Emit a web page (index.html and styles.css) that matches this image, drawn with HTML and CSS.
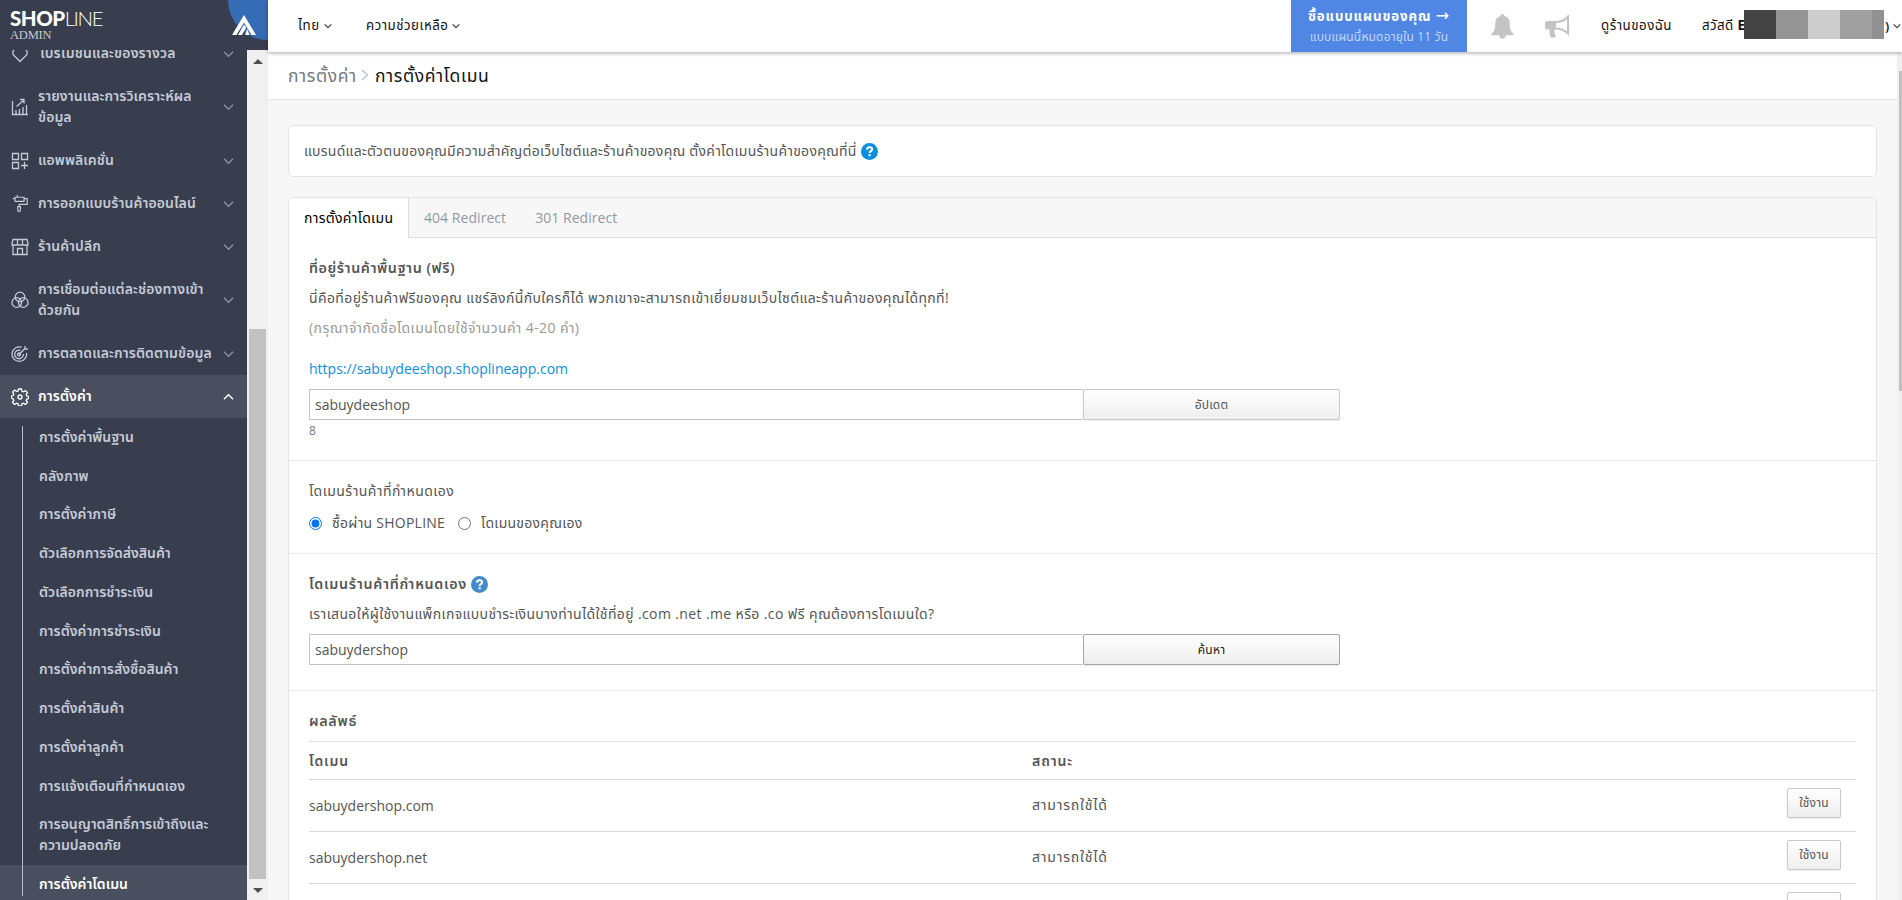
FILE: index.html
```
<!DOCTYPE html>
<html lang="th">
<head>
    <meta charset="UTF-8">
    <meta name="viewport" content="width=device-width, initial-scale=1.0">
    <title>การตั้งค่าโดเมน</title>
    <link rel="stylesheet" href="styles.css">
</head>
<body>
    <!-- icons -->
    <svg class="sprite" width="0" height="0">
        <symbol id="down" viewBox="0 0 12 8"><path d="M1 1.5l5 5 5-5"/></symbol>
        <symbol id="tag" viewBox="0 0 18 18"><path d="M9 16.5L2 9.5V6l3-3h8l3 3v3.500z"/></symbol>
        <symbol id="report" viewBox="0 0 18 18"><path d="M1.500 3v13.500H17M5 16v-4M8.500 16v-5M12 16V9M15.500 16V7M5.500 8.500L13 2M9 1.500h4v4"/></symbol>
        <symbol id="apps" viewBox="0 0 18 18"><path d="M1.500 1.500h6v6h-6zM10.500 1.500h6v6h-6zM1.500 10.500h6v6h-6zM13.500 10v7M10 13.500h7"/></symbol>
        <symbol id="paint" viewBox="0 0 18 20"><path d="M1 4h2.500M3.500 2v5h10V2.500h-10M6 0v3M13.500 4H17v6.500H8V13M6.500 13h3v3.500a1.500 2 0 0 1-3 0z"/></symbol>
        <symbol id="store" viewBox="0 0 18 18"><path d="M2 1.500h14l1 4v1.500H1V5.500zM2 7v9.500h14V7M6.500 1.500V7M11.500 1.500V7M6.500 16v-5.500h5V16"/></symbol>
        <symbol id="link" viewBox="0 0 18 18"><circle cx="9" cy="6" r="4.800"/><circle cx="5.800" cy="11.500" r="4.800"/><circle cx="12.200" cy="11.500" r="4.800"/></symbol>
        <symbol id="target" viewBox="0 0 18 18"><path d="M10.500 2.200A7.300 7.300 0 1 0 15.500 8M9.500 5.400A4.300 4.300 0 1 0 12.300 9M8 9.500l6-6M14 1v3h3"/><circle cx="8" cy="9.500" r="1.500"/></symbol>
        <symbol id="gear" viewBox="0 0 18 18"><path d="M7.500 1h3l.5 2.200 1.400.6 2-1.200 2 2-1.200 2 .6 1.400 1.900.5v2l-1.900.5-.6 1.400 1.200 2-2 2-2-1.200-1.400.6-.5 2.200h-3L7 15.800l-1.400-.6-2 1.200-2-2 1.200-2-.6-1.400L.5 10V8l1.700-.5.6-1.400-1.200-2 2-2 2 1.200L7 3.200z"/><circle cx="9" cy="9" r="2"/></symbol>
        <symbol id="help" viewBox="0 0 16 16"><circle cx="8" cy="8" r="8" fill="currentColor"/><path d="M5.600 6.200C5.700 4.600 6.700 4 8 4s2.500.7 2.500 2c0 1.600-2.400 1.600-2.400 3.300" fill="none" stroke="#fff" stroke-width="1.900"/><rect x="7.100" y="10.500" width="2" height="2" fill="#fff"/></symbol>
    </svg>

    <aside class="sidebar">
        <div class="brand">
            <div class="brand-name"><b>SHOP</b><span>LINE</span></div>
            <div class="brand-sub">ADMIN</div>
            <div class="brand-circle"></div>
            <svg class="brand-mark" viewBox="0 0 24 20"><path d="M12 0l12 20h-4.500L12 7.500 4.500 20H0zM12 9.500l2.200 3L10 20H6zM15.200 14l2.300 6h-4.500z" fill="#fff"/></svg>
        </div>
        <div class="side-body">
            <nav class="menu">
                <div class="item promo"><svg class="icon"><use href="#tag"/></svg><span>โปรโมชันและของรางวัล</span><svg class="arrow"><use href="#down"/></svg></div>
                <div class="item"><svg class="icon"><use href="#report"/></svg><span>รายงานและการวิเคราะห์ผล<br>ข้อมูล</span><svg class="arrow"><use href="#down"/></svg></div>
                <div class="item"><svg class="icon"><use href="#apps"/></svg><span>แอพพลิเคชั่น</span><svg class="arrow"><use href="#down"/></svg></div>
                <div class="item"><svg class="icon"><use href="#paint"/></svg><span>การออกแบบร้านค้าออนไลน์</span><svg class="arrow"><use href="#down"/></svg></div>
                <div class="item"><svg class="icon"><use href="#store"/></svg><span>ร้านค้าปลีก</span><svg class="arrow"><use href="#down"/></svg></div>
                <div class="item"><svg class="icon"><use href="#link"/></svg><span>การเชื่อมต่อแต่ละช่องทางเข้า<br>ด้วยกัน</span><svg class="arrow"><use href="#down"/></svg></div>
                <div class="item"><svg class="icon"><use href="#target"/></svg><span>การตลาดและการติดตามข้อมูล</span><svg class="arrow"><use href="#down"/></svg></div>
                <div class="item active"><svg class="icon"><use href="#gear"/></svg><span>การตั้งค่า</span><svg class="arrow up"><use href="#down"/></svg></div>
                <div class="submenu">
                    <div class="sub">การตั้งค่าพื้นฐาน</div>
                    <div class="sub">คลังภาพ</div>
                    <div class="sub">การตั้งค่าภาษี</div>
                    <div class="sub">ตัวเลือกการจัดส่งสินค้า</div>
                    <div class="sub">ตัวเลือกการชำระเงิน</div>
                    <div class="sub">การตั้งค่าการชำระเงิน</div>
                    <div class="sub">การตั้งค่าการสั่งซื้อสินค้า</div>
                    <div class="sub">การตั้งค่าสินค้า</div>
                    <div class="sub">การตั้งค่าลูกค้า</div>
                    <div class="sub">การแจ้งเตือนที่กำหนดเอง</div>
                    <div class="sub">การอนุญาตสิทธิ์การเข้าถึงและ<br>ความปลอดภัย</div>
                    <div class="sub active">การตั้งค่าโดเมน</div>
                </div>
            </nav>
            <div class="scroll">
                <div class="scroll-up"></div>
                <div class="scroll-thumb"></div>
                <div class="scroll-down"></div>
            </div>
        </div>
    </aside>

    <div class="page">
        <header class="topbar">
            <div class="top-link lang">ไทย<svg class="caret"><use href="#down"/></svg></div>
            <div class="top-link">ความช่วยเหลือ<svg class="caret"><use href="#down"/></svg></div>
            <div class="top-right">
                <div class="plan">
                    <div class="plan-title">ซื้อแบบแผนของคุณ <span class="plan-arrow">→</span></div>
                    <div class="plan-text">แบบแผนนี้หมดอายุใน 11 วัน</div>
                </div>
                <svg class="bell" viewBox="0 0 24 26"><path d="M12 0c1.200 0 2 .8 2 2 4 .9 5.500 4 5.500 8 0 6 1.500 8.500 4 10.500v1.500H.5v-1.500C3 18.500 4.500 16 4.500 10c0-4 1.500-7.100 5.500-8 0-1.200.8-2 2-2zM8.500 22h7c-.3 2.500-1.700 3.500-3.500 3.500s-3.200-1-3.500-3.500z"/></svg>
                <svg class="horn" viewBox="0 0 26 23"><path d="M2 6h9v8.500H9.500c-.5 2 .2 4.500 1.500 6.500-1 1.800-4 2-5.500 1-1-2-1.300-5-.8-7.500H2C.8 14.500 0 13.500 0 12.500V8c0-1 .8-2 2-2z"/><path d="M11 7c5 0 9-2 12-5.500v17C20 15.500 16 13.500 11 13.500" fill="none" stroke="#c4c4c4" stroke-width="2"/><path d="M23 8a2.500 2.500 0 0 1 0 4.500z"/></svg>
                <div class="top-text">ดูร้านของฉัน</div>
                <div class="user">
                    <span class="hello">สวัสดี <b>E</b></span>
                    <div class="mask"><i class="m1"></i><i class="m2"></i><i class="m3"></i><i class="m4"></i><i class="m5"></i></div>
                    <span class="paren">)</span>
                    <svg class="caret"><use href="#down"/></svg>
                </div>
            </div>
        </header>

        <div class="breadcrumb">
            <span class="crumb">การตั้งค่า</span>
            <svg class="sep" viewBox="0 0 8 12"><path d="M1 1l5.500 5L1 11"/></svg>
            <span class="current">การตั้งค่าโดเมน</span>
        </div>

        <main class="content">
            <div class="card intro">
                <span>แบรนด์และตัวตนของคุณมีความสำคัญต่อเว็บไซต์และร้านค้าของคุณ ตั้งค่าโดเมนร้านค้าของคุณที่นี่</span>
                <svg class="help"><use href="#help"/></svg>
            </div>

            <div class="card">
                <div class="tabs">
                    <div class="tab active">การตั้งค่าโดเมน</div>
                    <div class="tab">404 Redirect</div>
                    <div class="tab">301 Redirect</div>
                </div>

                <section class="section base">
                    <h4 class="title">ที่อยู่ร้านค้าพื้นฐาน (ฟรี)</h4>
                    <p class="desc">นี่คือที่อยู่ร้านค้าฟรีของคุณ แชร์ลิงก์นี้กับใครก็ได้ พวกเขาจะสามารถเข้าเยี่ยมชมเว็บไซต์และร้านค้าของคุณได้ทุกที่!</p>
                    <p class="muted">(กรุณาจำกัดชื่อโดเมนโดยใช้จำนวนคำ 4-20 คำ)</p>
                    <a class="shop-link" href="#">https://sabuydeeshop.shoplineapp.com</a>
                    <div class="input-group">
                        <input type="text" value="sabuydeeshop">
                        <button class="btn">อัปเดต</button>
                    </div>
                    <div class="count">8</div>
                </section>

                <section class="section custom">
                    <div class="label">โดเมนร้านค้าที่กำหนดเอง</div>
                    <div class="radios">
                        <label class="opt-buy"><input type="radio" name="domain" checked><span>ซื้อผ่าน SHOPLINE</span></label>
                        <label class="opt-own"><input type="radio" name="domain"><span>โดเมนของคุณเอง</span></label>
                    </div>
                </section>

                <section class="section search">
                    <h4 class="title own"><span>โดเมนร้านค้าที่กำหนดเอง</span><svg class="help soft"><use href="#help"/></svg></h4>
                    <p class="desc">เราเสนอให้ผู้ใช้งานแพ็กเกจแบบชำระเงินบางท่านได้ใช้ที่อยู่ .com .net .me หรือ .co ฟรี คุณต้องการโดเมนใด?</p>
                    <div class="input-group">
                        <input type="text" value="sabuydershop">
                        <button class="btn focus">ค้นหา</button>
                    </div>
                </section>

                <section class="section results">
                    <h4 class="title">ผลลัพธ์</h4>
                    <div class="row head"><span>โดเมน</span><span>สถานะ</span></div>
                    <div class="row"><span>sabuydershop.com</span><span class="status">สามารถใช้ได้</span><button class="btn small">ใช้งาน</button></div>
                    <div class="row"><span>sabuydershop.net</span><span class="status">สามารถใช้ได้</span><button class="btn small">ใช้งาน</button></div>
                    <div class="row"><span></span><span></span><button class="btn small"></button></div>
                </section>
            </div>
        </main>
        <div class="page-scroll"><div class="page-thumb"></div></div>
    </div>
</body>
</html>
```
FILE: styles.css
```
* {
    box-sizing: border-box;
}
body {
    margin: 0;
    display: flex;
    height: 900px;
    overflow: hidden;
    font-family: "Open Sans", "Noto Sans Thai", "Noto Sans", sans-serif;
    font-size: 14px;
    color: #555;
    background: #f7f7f7;
    white-space: nowrap;
}
h4, p {
    margin: 0;
}
.sprite {
    position: absolute;
}

/* sidebar */
.sidebar {
    width: 268px;
    height: 900px;
    flex: none;
    display: flex;
    flex-direction: column;
    background: #383e4d;
}
.brand {
    position: relative;
    height: 50px;
    flex: none;
    padding: 8px 0 0 10px;
    overflow: hidden;
    color: #fff;
}
.brand-name {
    font-family: Lato, sans-serif;
    font-size: 20.5px;
    line-height: 21px;
}
.brand-name b {
    font-weight: 900;
    letter-spacing: -.5px;
}
.brand-name span {
    font-weight: 300;
    letter-spacing: -1.4px;
}
.brand-sub {
    font-family: "Liberation Serif", serif;
    font-size: 12.5px;
    line-height: 12px;
    letter-spacing: -.2px;
    color: #c6c9d0;
}
.brand-circle {
    position: absolute;
    left: 228px;
    top: -40px;
    width: 80px;
    height: 80px;
    border-radius: 50%;
    background: #366bb5;
}
.brand-mark {
    position: absolute;
    left: 232px;
    top: 15px;
    width: 24px;
    height: 20px;
}
.side-body {
    flex: 1;
    min-height: 0;
    display: flex;
}
.menu {
    width: 247px;
    overflow: hidden;
    color: #c4cad8;
    font-weight: 600;
    line-height: 21px;
}
.item {
    display: flex;
    align-items: center;
    padding: 11px 13px 11px 11px;
}
.promo {
    margin-top: -18px;
}
.item span {
    flex: 1;
    margin: -1px 0 1px 9px;
    letter-spacing: .08px;
}
.item.promo span {
    margin: -1px 0 1px 11px;
    letter-spacing: .15px;
}
.item.active, .sub.active {
    background: #494f5e;
    color: #fff;
}
.icon {
    width: 18px;
    height: 18px;
    fill: none;
    stroke: currentColor;
    stroke-width: 1.3;
}
.arrow {
    width: 11px;
    height: 8px;
    fill: none;
    stroke: #8a90a0;
    stroke-width: 1.5;
}
.arrow.up {
    transform: rotate(180deg);
    stroke: #fff;
}
.submenu {
    position: relative;
}
.submenu::before {
    content: "";
    position: absolute;
    left: 22px;
    top: 8px;
    width: 1px;
    height: 470px;
    background: #b9bdc8;
}
.sub {
    padding: 7.875px 0 9.875px 39px;
}
.scroll {
    width: 21px;
    background: #f0f0f0;
    display: flex;
    flex-direction: column;
    align-items: center;
}
.scroll-up {
    margin-top: 9px;
    border: 5px solid transparent;
    border-top: 0;
    border-bottom-color: #505050;
}
.scroll-thumb {
    width: 17px;
    height: 550px;
    margin-top: 265px;
    background: #c1c1c1;
}
.scroll-down {
    margin-top: 9px;
    border: 5px solid transparent;
    border-bottom: 0;
    border-top-color: #505050;
}

/* top bar */
.page {
    position: relative;
    flex: 1;
    min-width: 0;
}
.topbar {
    position: relative;
    height: 52px;
    display: flex;
    align-items: center;
    padding-left: 30px;
    background: #fff;
    box-shadow: 0 1px 4px rgba(0, 0, 0, .35);
    color: #111;
    font-size: 13.3px;
    letter-spacing: .5px;
    z-index: 2;
}
.top-link {
    display: flex;
    align-items: center;
    gap: 4px;
}
.lang {
    width: 68px;
}
.caret {
    width: 8px;
    height: 6px;
    fill: none;
    stroke: #444;
    stroke-width: 1.8;
}
.top-right {
    width: 611px;
    height: 52px;
    margin-left: auto;
    display: flex;
    align-items: center;
}
.plan {
    width: 176px;
    height: 52px;
    background: #5087e5;
    color: #fff;
    text-align: center;
    padding-top: 5px;
}
.plan-title {
    font-weight: 700;
    line-height: 22px;
    letter-spacing: .9px;
}
.plan-arrow {
    font-family: "DejaVu Sans", sans-serif;
    font-size: 16px;
    font-weight: 400;
    line-height: 1;
}
.plan-text {
    font-size: 12px;
    line-height: 20px;
    letter-spacing: .15px;
    color: #c2d6fa;
}
.bell {
    width: 23px;
    height: 25px;
    margin-left: 24px;
    fill: #c4c4c4;
}
.horn {
    width: 26px;
    height: 23px;
    margin-left: 31px;
    fill: #c4c4c4;
}
.top-text {
    width: 101px;
    margin-left: 30px;
}
.user {
    display: flex;
    align-items: center;
}
.hello {
    width: 42px;
    overflow: hidden;
    letter-spacing: .4px;
}
.mask {
    display: flex;
    flex: none;
    width: 140px;
    height: 29px;
    margin-top: -3px;
}
.mask i {
    width: 32px;
}
.mask .m1 { background: #444; }
.mask .m2 { background: #949494; }
.mask .m3 { background: #cdcdcd; }
.mask .m4 { background: #9f9f9f; }
.mask .m5 { background: #919191; width: 12px; }
.paren {
    margin-left: 1px;
    font-weight: 600;
    letter-spacing: 0;
}
.user .caret {
    flex: none;
    margin-left: 4px;
}

/* breadcrumb */
.breadcrumb {
    height: 48px;
    display: flex;
    align-items: center;
    padding-left: 20px;
    background: #fff;
    border-bottom: 1px solid #e5e5e5;
    font-size: 17.5px;
    letter-spacing: .6px;
    color: #111;
}
.crumb {
    width: 66px;
    color: #777;
}
.sep {
    width: 8px;
    height: 12px;
    margin: -2px 6px 0 7px;
    fill: none;
    stroke: #b9bdc8;
    stroke-width: 1.3;
}
.crumb, .current {
    padding-top: 1px;
}

/* content */
.content {
    padding: 25px 25px 0 20px;
}
.card {
    background: #fff;
    border: 1px solid #e5e5e5;
    border-radius: 5px;
}
.intro {
    height: 52px;
    margin-bottom: 20px;
    padding-left: 15px;
    display: flex;
    align-items: center;
    gap: 4px;
    letter-spacing: .26px;
}
.help {
    width: 17px;
    height: 17px;
    color: #0a8fe0;
}
.help.soft {
    color: #428bca;
}
.tabs {
    height: 40px;
    display: flex;
    background: #f7f7f7;
    border-bottom: 1px solid #dcdcdc;
    border-radius: 5px 5px 0 0;
    color: #9297a5;
    line-height: 40px;
}
.tab {
    padding: 0 14px 0 15px;
    letter-spacing: .05px;
}
.tab.active {
    width: 120px;
    height: 40px;
    background: #fff;
    border-right: 1px solid #dcdcdc;
    border-radius: 5px 0 0 0;
    color: #000;
    letter-spacing: .3px;
}
.section {
    padding: 0 20px;
    border-bottom: 1px solid #e8e8e8;
}
.title {
    font-size: 14.3px;
    font-weight: 600;
    line-height: 30px;
    letter-spacing: .7px;
}
.base .title {
    letter-spacing: .55px;
}
.desc {
    line-height: 30px;
    letter-spacing: .38px;
}
.muted {
    line-height: 30px;
    letter-spacing: .43px;
    color: #999;
}
.base {
    height: 223px;
    padding-top: 15px;
}
.shop-link {
    display: block;
    line-height: 40px;
    margin-top: 6px;
    color: #0a8fe0;
    text-decoration: none;
}
.input-group {
    width: 1031px;
    height: 31px;
    display: flex;
}
.input-group input {
    width: 774px;
    border: 1px solid #c4c4c4;
    border-right: 0;
    padding: 0 5px;
    font: inherit;
    color: #555;
}
.btn {
    border: 1px solid #c8c8c8;
    border-radius: 2px;
    background: linear-gradient(#fff, #eee);
    box-shadow: 0 1px 1px rgba(0, 0, 0, .08);
    font-family: inherit;
    font-size: 12px;
    letter-spacing: .2px;
    color: #555;
}
.input-group .btn {
    flex: 1;
}
.btn.focus {
    border-color: #a5a5a5;
    color: #222;
}
.count {
    font-size: 12px;
    line-height: 22px;
    color: #777;
}
.custom {
    height: 93px;
    padding-top: 15px;
}
.label {
    line-height: 30px;
    letter-spacing: .45px;
}
.radios {
    display: flex;
    line-height: 34px;
    letter-spacing: .25px;
}
.radios label {
    display: flex;
    align-items: center;
}
.radios input {
    width: 13px;
    height: 13px;
    margin: 0 10px 0 0;
}
.opt-buy {
    width: 149px;
}
.search {
    height: 137px;
    padding-top: 15px;
}
.title.own {
    display: flex;
    align-items: center;
    gap: 4px;
}
.search .input-group {
    margin-top: 5px;
}
.results {
    padding-top: 15px;
    border: 0;
}
.results .title {
    height: 35px;
}
.row {
    height: 52px;
    display: flex;
    align-items: center;
    border-top: 1px solid #d8d8d8;
}
.row span {
    width: 723px;
}
.row .status {
    letter-spacing: .8px;
}
.row.head {
    height: 38px;
    padding-top: 2px;
    border-color: #e3e3e3;
    font-weight: 600;
    letter-spacing: .9px;
}
.btn.small {
    width: 54px;
    height: 30px;
    margin: -5px 15px 0 auto;
    padding: 0;
}
.page-scroll {
    position: absolute;
    right: 0;
    top: 52px;
    width: 5px;
    height: 848px;
    padding: 19px 0 0 2px;
    background: #f0f0f0;
}
.page-thumb {
    height: 320px;
    background: #c1c1c1;
}
```
